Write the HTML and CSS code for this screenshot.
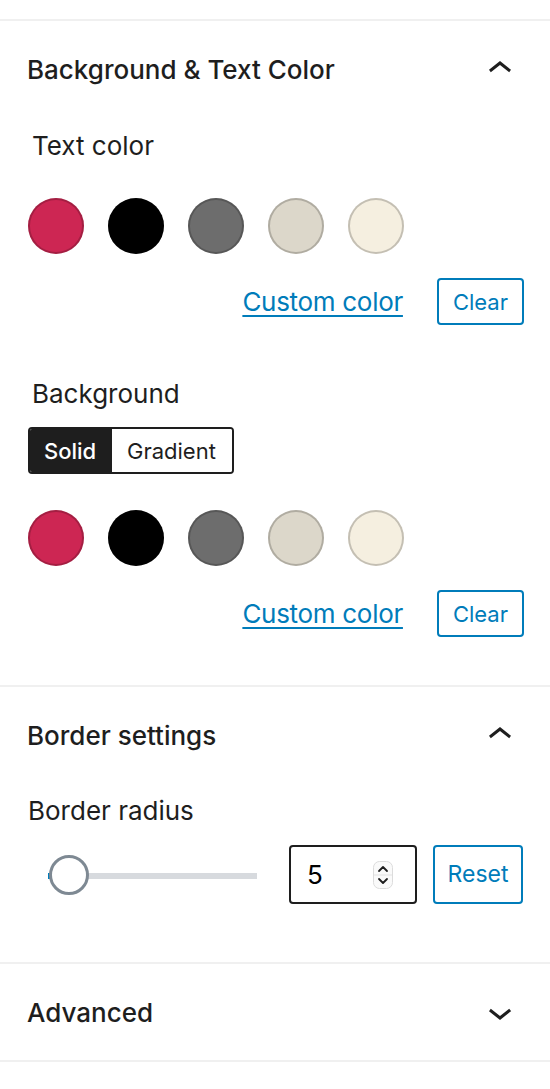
FILE: index.html
```html
<!DOCTYPE html>
<html lang="en">
<head>
<meta charset="utf-8">
<title>Block settings</title>
<link rel="stylesheet" href="styles.css">
</head>
<body>
<div class="sidebar">
  <section class="panel">
    <div class="panel-header">
      <h2 class="panel-title">Background &amp; Text Color</h2>
      <svg class="chevron" viewBox="0 0 24 24" width="48" height="48" aria-hidden="true"><path d="M6.5 12.4L12 8l5.5 4.4-.9 1.2L12 10l-4.6 3.6-.9-1.2z"/></svg>
    </div>
    <div class="panel-body panel-body-colors">
      <div class="label label-indent">Text color</div>
      <div class="swatches">
        <span class="swatch swatch-red"></span>
        <span class="swatch swatch-black"></span>
        <span class="swatch swatch-gray"></span>
        <span class="swatch swatch-stone"></span>
        <span class="swatch swatch-cream"></span>
      </div>
      <div class="actions">
        <a class="link" href="#">Custom color</a>
        <button class="btn" type="button">Clear</button>
      </div>
      <div class="label label-indent label-bg">Background</div>
      <div class="segmented">
        <span class="seg seg-active">Solid</span>
        <span class="seg">Gradient</span>
      </div>
      <div class="swatches">
        <span class="swatch swatch-red"></span>
        <span class="swatch swatch-black"></span>
        <span class="swatch swatch-gray"></span>
        <span class="swatch swatch-stone"></span>
        <span class="swatch swatch-cream"></span>
      </div>
      <div class="actions">
        <a class="link" href="#">Custom color</a>
        <button class="btn" type="button">Clear</button>
      </div>
    </div>
  </section>

  <section class="panel">
    <div class="panel-header">
      <h2 class="panel-title">Border settings</h2>
      <svg class="chevron" viewBox="0 0 24 24" width="48" height="48" aria-hidden="true"><path d="M6.5 12.4L12 8l5.5 4.4-.9 1.2L12 10l-4.6 3.6-.9-1.2z"/></svg>
    </div>
    <div class="panel-body panel-body-border">
      <div class="label label-radius">Border radius</div>
      <div class="range-row">
        <div class="range">
          <span class="range-fill"></span>
          <span class="range-track"></span>
          <span class="range-thumb"></span>
        </div>
        <div class="number-input">
          <span class="number-value">5</span>
          <svg class="spinner" viewBox="0 0 20 28" width="20" height="28" aria-hidden="true">
            <rect x="0.5" y="0.5" width="19" height="27" rx="6" fill="#fafafa" stroke="#dcdcdc"/>
            <line x1="1" y1="14" x2="19" y2="14" stroke="#e2e2e2"/>
            <path d="M6 10 L10 6 L14 10" fill="none" stroke="#1e1e1e" stroke-width="1.8" stroke-linecap="round" stroke-linejoin="round"/>
            <path d="M6 18 L10 22 L14 18" fill="none" stroke="#1e1e1e" stroke-width="1.8" stroke-linecap="round" stroke-linejoin="round"/>
          </svg>
        </div>
        <button class="btn btn-reset" type="button">Reset</button>
      </div>
    </div>
  </section>

  <section class="panel panel-last">
    <div class="panel-header">
      <h2 class="panel-title">Advanced</h2>
      <svg class="chevron" viewBox="0 0 24 24" width="48" height="48" aria-hidden="true"><path d="M17.5 11.6L12 16l-5.5-4.4.9-1.2L12 14l4.6-3.6 1 1.2z"/></svg>
    </div>
  </section>
</div>
</body>
</html>
```

FILE: styles.css
```css
* {
  box-sizing: border-box;
}

html, body {
  margin: 0;
  padding: 0;
  background: #ffffff;
}

body {
  font-family: "Inter", "Noto Sans", "Liberation Sans", sans-serif;
  color: #1e1e1e;
}

.sidebar {
  width: 550px;
  padding-top: 19px;
}

.panel {
  border-top: 2px solid #f0f0f0;
}

.panel-last {
  border-bottom: 2px solid #f0f0f0;
}

.panel-header {
  height: 96px;
  display: flex;
  align-items: center;
  justify-content: space-between;
  padding: 2px 26px 0 27px;
}

.panel-title {
  margin: 0;
  font-size: 26px;
  line-height: 32px;
  font-weight: 500;
  color: #1e1e1e;
}

.chevron {
  display: block;
  fill: #1e1e1e;
  margin-top: -3px;
}

.panel-body {
  padding: 0 26px 0 28px;
}

.panel-body-colors {
  padding-bottom: 48px;
}

.panel-body-border {
  padding-bottom: 58px;
}

.label {
  font-size: 26px;
  line-height: 32px;
  font-weight: 400;
  color: #1e1e1e;
  margin-top: 13px;
}

.label-indent {
  padding-left: 4px;
}

.label-bg {
  margin-top: 53px;
}

.label-radius {
  margin-top: 12px;
}

.swatches {
  display: flex;
  gap: 24px;
  margin-top: 36px;
}

.swatch {
  display: block;
  width: 56px;
  height: 56px;
  border-radius: 50%;
  box-shadow: inset 0 0 0 2px rgba(0, 0, 0, 0.2);
}

.swatch-red { background-color: #cd2653; }
.swatch-black { background-color: #000000; }
.swatch-gray { background-color: #6d6d6d; }
.swatch-stone { background-color: #dcd7ca; }
.swatch-cream { background-color: #f5efe0; }

.actions {
  display: flex;
  align-items: center;
  justify-content: flex-end;
  gap: 34px;
  margin-top: 24px;
}

.link {
  font-size: 26px;
  line-height: 32px;
  letter-spacing: -0.3px;
  color: #007cba;
  text-decoration: underline;
  text-decoration-thickness: 2px;
  text-underline-offset: 4px;
}

.btn {
  height: 47px;
  padding: 0 14px;
  border: 2px solid #007cba;
  border-radius: 4px;
  background: #ffffff;
  color: #007cba;
  font-family: "Inter", "Noto Sans", "Liberation Sans", sans-serif;
  font-size: 22px;
  font-weight: 400;
  line-height: 1;
  display: flex;
  align-items: center;
  justify-content: center;
}

.segmented {
  display: inline-flex;
  margin-top: 17px;
  height: 47px;
  border: 2px solid #1e1e1e;
  border-radius: 4px;
  overflow: hidden;
  vertical-align: top;
}

.seg {
  display: flex;
  align-items: center;
  font-size: 22px;
  line-height: 1;
  color: #1e1e1e;
  background: #ffffff;
  padding: 0 16px 0 15px;
}

.seg-active {
  background: #1e1e1e;
  color: #ffffff;
  font-weight: 500;
  padding: 0 15px 0 14px;
  width: 82px;
}

.range-row {
  display: flex;
  align-items: center;
  height: 59px;
  margin-top: 18px;
}

.range {
  position: relative;
  width: 208px;
  height: 40px;
  margin-left: 21px;
}

.range-track {
  position: absolute;
  left: 0;
  right: 0;
  top: 18px;
  height: 6px;
  background: #d7dade;
}

.range-fill {
  position: absolute;
  left: -1px;
  top: 18px;
  width: 8px;
  height: 6px;
  background: #007cba;
  z-index: 1;
}

.range-thumb {
  position: absolute;
  left: 0;
  top: 0;
  width: 40px;
  height: 40px;
  border-radius: 50%;
  background: #ffffff;
  border: 3px solid #7e8993;
  z-index: 2;
}

.number-input {
  display: flex;
  align-items: center;
  width: 128px;
  height: 59px;
  margin-left: 32px;
  padding: 0 22px 0 16px;
  border: 2px solid #1e1e1e;
  border-radius: 4px;
}

.number-value {
  font-size: 26px;
  line-height: 1;
  color: #000000;
  font-family: "Inter", "Liberation Sans", sans-serif;
}

.spinner {
  display: block;
  margin-left: auto;
}

.btn-reset {
  height: 59px;
  width: 90px;
  margin-left: 16px;
  padding: 0;
  font-size: 23px;
}
```
